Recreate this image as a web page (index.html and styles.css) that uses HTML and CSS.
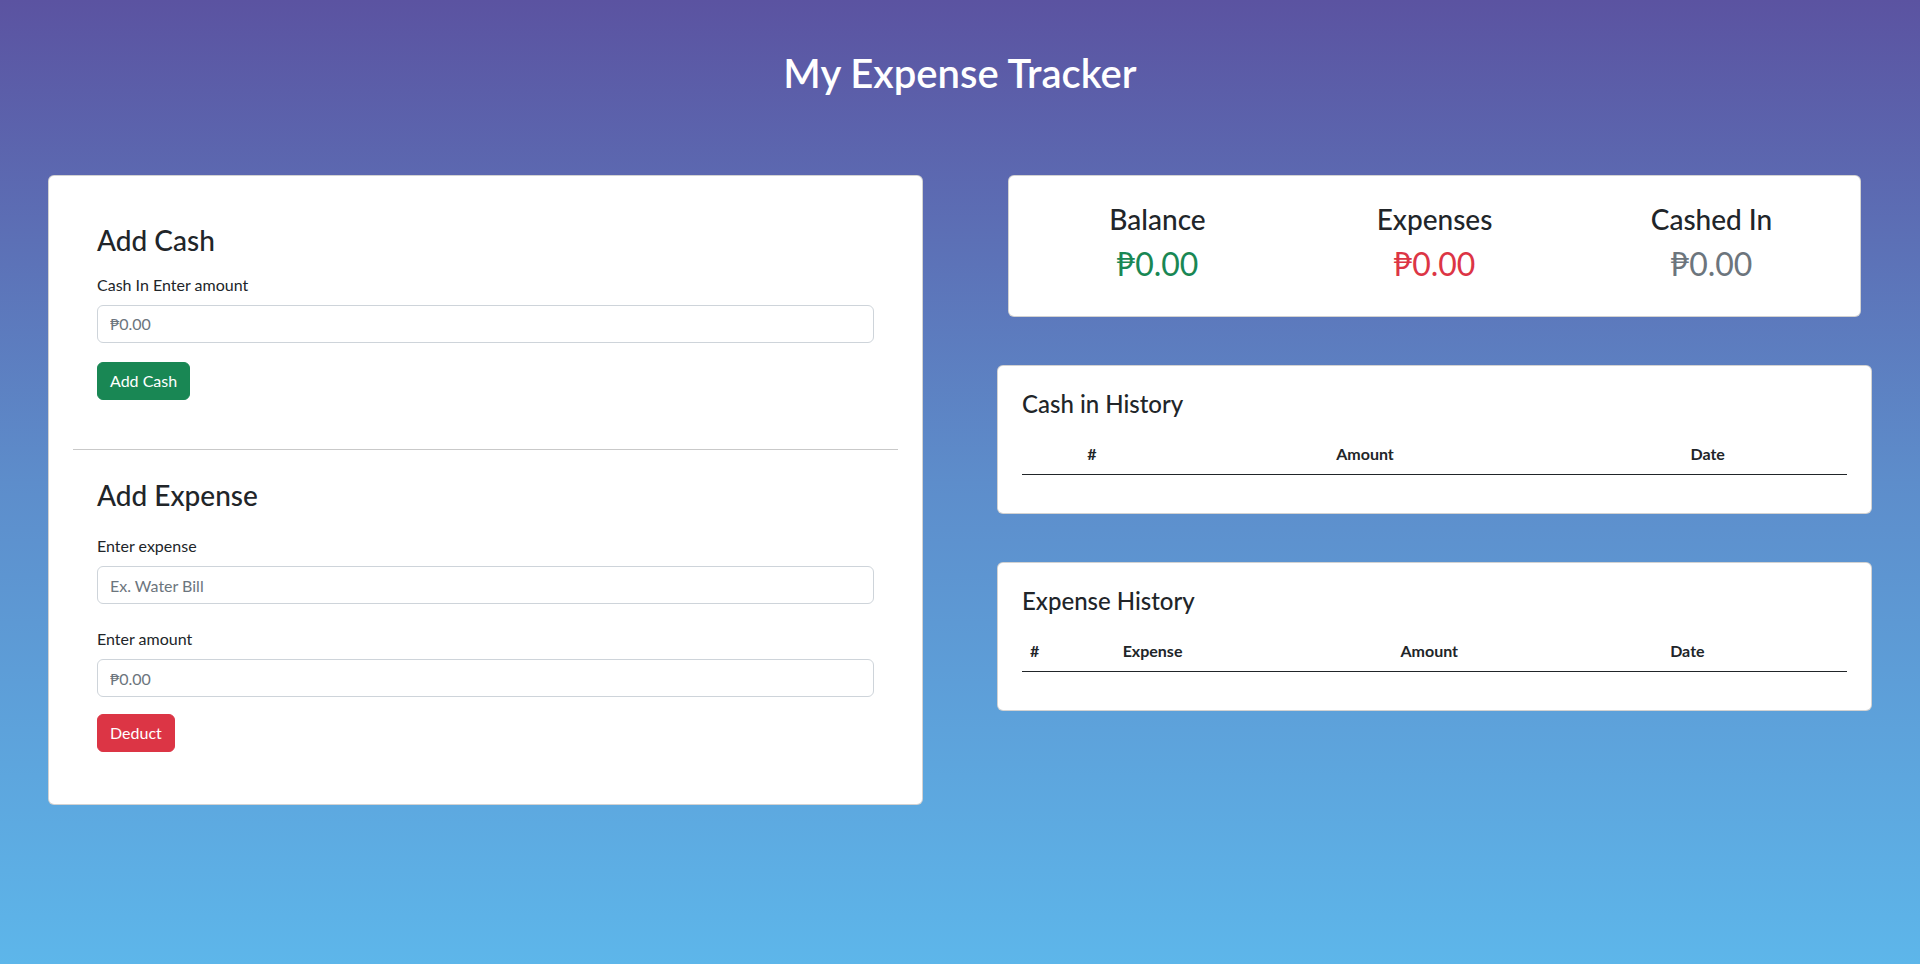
FILE: index.html
```html
<!DOCTYPE html>
<html lang="en">
<head>
<meta charset="utf-8">
<title>My Expense Tracker</title>
<link rel="stylesheet" href="styles.css">
</head>
<body>
<header class="app-header">
  <h1 class="app-title">My Expense Tracker</h1>
</header>
<main class="layout">
  <section class="card form-card">
    <div class="form-section first">
      <h3 class="section-title">Add Cash</h3>
      <label class="form-label" for="cash">Cash In Enter amount</label>
      <input class="form-control" id="cash" type="text" placeholder="₱0.00">
      <button class="btn btn-success" type="button">Add Cash</button>
    </div>
    <hr class="divider">
    <div class="form-section second">
      <h3 class="section-title">Add Expense</h3>
      <label class="form-label" for="expense">Enter expense</label>
      <input class="form-control" id="expense" type="text" placeholder="Ex. Water Bill">
      <label class="form-label" for="amount">Enter amount</label>
      <input class="form-control" id="amount" type="text" placeholder="₱0.00">
      <button class="btn btn-danger" type="button">Deduct</button>
    </div>
  </section>
  <div class="side">
    <section class="card summary-card">
      <div class="summary-item">
        <h3 class="summary-label">Balance</h3>
        <div class="summary-value text-success">₱0.00</div>
      </div>
      <div class="summary-item">
        <h3 class="summary-label">Expenses</h3>
        <div class="summary-value text-danger">₱0.00</div>
      </div>
      <div class="summary-item">
        <h3 class="summary-label">Cashed In</h3>
        <div class="summary-value text-muted">₱0.00</div>
      </div>
    </section>
    <section class="card history-card">
      <h4 class="history-title">Cash in History</h4>
      <table class="table centered">
        <thead>
          <tr><th>#</th><th>Amount</th><th>Date</th></tr>
        </thead>
        <tbody></tbody>
      </table>
    </section>
    <section class="card history-card">
      <h4 class="history-title">Expense History</h4>
      <table class="table">
        <thead>
          <tr><th>#</th><th>Expense</th><th>Amount</th><th>Date</th></tr>
        </thead>
        <tbody></tbody>
      </table>
    </section>
  </div>
</main>
</body>
</html>
```

FILE: styles.css
```css
* { box-sizing: border-box; }

html, body { height: 100%; }

body {
  margin: 0;
  min-height: 964px;
  font-family: "Lato", "Open Sans", sans-serif;
  font-size: 16px;
  line-height: 1.5;
  color: #212529;
  background: linear-gradient(180deg, #5b53a1 0%, #5d8dcb 50%, #5db6ea 100%);
}

.app-header {
  padding: 49px 0 78px;
  text-align: center;
}

.app-title {
  margin: 0;
  font-size: 40px;
  line-height: 48px;
  font-weight: 600;
  color: #fff;
}

.layout {
  display: grid;
  grid-template-columns: 1fr 1fr;
  column-gap: 74px;
  padding: 0 48px;
  align-items: start;
}

.card {
  background: #fff;
  border: 1px solid rgba(0, 0, 0, 0.175);
  border-radius: 6px;
}

.form-card {
  padding: 24px;
}

.form-section {
  display: flex;
  flex-direction: column;
  align-items: flex-start;
  padding: 24px;
}

.form-section.first { padding-bottom: 24px; }
.form-section.second { padding-top: 24px; padding-bottom: 28px; }

.section-title {
  margin: 0;
  font-size: 28px;
  line-height: 1.2;
  font-weight: 500;
}

.first .section-title { margin-bottom: 15px; }
.second .section-title { margin-bottom: 22px; }

.form-label {
  display: block;
  margin-bottom: 8px;
  font-size: 16px;
  line-height: 24px;
}

.form-control {
  display: block;
  width: 100%;
  height: 38px;
  padding: 6px 12px;
  font-family: inherit;
  font-size: 16px;
  line-height: 24px;
  color: #212529;
  background: #fff;
  border: 1px solid #ced4da;
  border-radius: 6px;
  outline: none;
}

.form-control::placeholder { color: #6c757d; opacity: 1; }

.first .form-control { margin-bottom: 19px; }
.second .form-control { margin-bottom: 23px; }
.second .form-control:last-of-type { margin-bottom: 17px; }

.btn {
  display: inline-block;
  height: 38px;
  padding: 6px 12px;
  font-family: inherit;
  font-size: 16px;
  line-height: 24px;
  color: #fff;
  border: 1px solid transparent;
  border-radius: 6px;
  cursor: pointer;
}

.btn-success { background: #198754; border-color: #198754; }
.btn-danger { background: #dc3545; border-color: #dc3545; }

.divider {
  margin: 25px 0 5px;
  border: 0;
  border-top: 1px solid #c9c9c9;
}

.side {
  display: flex;
  flex-direction: column;
  gap: 48px;
}

.summary-card {
  margin: 0 11px;
  display: grid;
  grid-template-columns: repeat(3, 1fr);
  padding: 27px 10px 33px;
  text-align: center;
}

.summary-label {
  margin: 0 0 8px;
  font-size: 28px;
  line-height: 1.2;
  font-weight: 500;
}

.summary-value {
  font-size: 32px;
  line-height: 1.2;
}

.text-success { color: #198754; }
.text-danger { color: #dc3545; }
.text-muted { color: #6c757d; }

.history-card {
  padding: 24px;
}

.history-title {
  margin: 0 0 15px;
  font-size: 24px;
  line-height: 1.2;
  font-weight: 500;
}

.table {
  width: 100%;
  border-collapse: collapse;
  margin-bottom: 14px;
}

.table th {
  padding: 8px;
  font-weight: 700;
  line-height: 24px;
  text-align: left;
  border-bottom: 1px solid #212529;
}

.table.centered th { text-align: center; }
```
